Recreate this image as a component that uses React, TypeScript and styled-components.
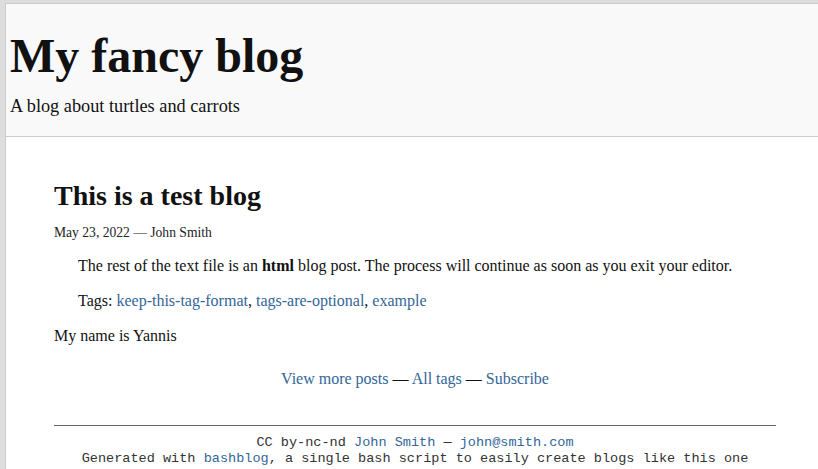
import React from "react";
import styled, { createGlobalStyle } from "styled-components";

const Global = createGlobalStyle`
  html, body { margin: 0; padding: 0; }
  body {
    background: #dddddd;
    font-family: "Liberation Serif", "Times New Roman", serif;
    color: #111;
    overflow: hidden;
  }
`;

const Holder = styled.div`
  padding: 3px 0 0 5px;
  background: #dddddd;
  min-height: 469px;
  box-sizing: border-box;
`;

const HeaderHolder = styled.header`
  background: #f9f9f9;
  border-top: 1px solid #ccc;
  border-left: 1px solid #ccc;
`;

const HeaderInner = styled.div`
  padding: 12px 0 7px 4px;
`;

const Title = styled.h1`
  font-size: 48px;
  font-weight: bold;
  margin: 12px 0 12px;
  line-height: 56px;
`;

const Description = styled.div`
  font-size: 18.3px;
  line-height: 20px;
  margin-bottom: 13px;
`;

const Body = styled.main`
  background: #fff;
  border: 1px solid #ccc;
  border-right: none;
  padding: 0 42px 24px 48px;
  min-height: 340px;
`;

const PostTitle = styled.h3`
  font-size: 28px;
  font-weight: bold;
  margin: 42px 0 0;
  line-height: 34px;
`;

const Subtitle = styled.div`
  font-size: 13.6px;
  line-height: 15px;
  margin: 12px 0 12px;
  color: #222;
`;

const Para = styled.p<{ $indent?: boolean }>`
  font-size: 16px;
  margin: 16px ${(p) => (p.$indent ? "24px" : "0")};
  line-height: 19px;
`;

const Link = styled.a`
  text-decoration: none;
  color: #336699;
`;

const AllPosts = styled.div`
  margin-top: 24px;
  text-align: center;
  font-size: 16px;
  line-height: 19px;
  margin-bottom: 37px;
`;

const Footer = styled.footer`
  border-top: 1px solid #666;
  padding-top: 9px;
  color: #333;
  text-align: center;
  font-size: 13.55px;
  line-height: 16px;
  font-family: "Liberation Mono", "Courier New", monospace;
`;

export default function App() {
  return (
    <>
      <Global />
      <Holder>
        <HeaderHolder>
          <HeaderInner>
            <Title>My fancy blog</Title>
            <Description>A blog about turtles and carrots</Description>
          </HeaderInner>
        </HeaderHolder>
        <Body>
          <PostTitle>This is a test blog</PostTitle>
          <Subtitle>May 23, 2022 — John Smith</Subtitle>
          <Para $indent>
            The rest of the text file is an <b>html</b> blog post. The process
            will continue as soon as you exit your editor.
          </Para>
          <Para $indent>
            Tags: <Link href="#">keep-this-tag-format</Link>,{" "}
            <Link href="#">tags-are-optional</Link>,{" "}
            <Link href="#">example</Link>
          </Para>
          <Para>My name is Yannis</Para>
          <AllPosts>
            <Link href="#">View more posts</Link> — <Link href="#">All tags</Link>{" "}
            — <Link href="#">Subscribe</Link>
          </AllPosts>
          <Footer>
            CC by-nc-nd <Link href="#">John Smith</Link> —{" "}
            <Link href="#">john@smith.com</Link>
            <br />
            Generated with <Link href="#">bashblog</Link>, a single bash script
            to easily create blogs like this one
          </Footer>
        </Body>
      </Holder>
    </>
  );
}
